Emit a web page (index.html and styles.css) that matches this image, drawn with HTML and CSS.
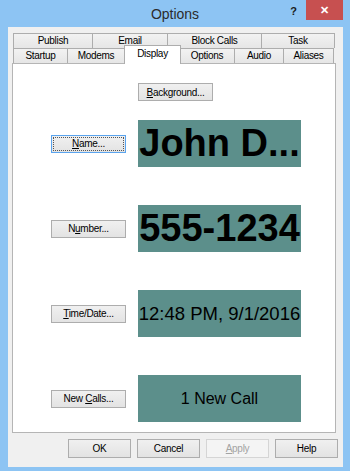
FILE: index.html
```html
<!DOCTYPE html>
<html>

<head>
    <meta charset="UTF-8">
    <title>Options</title>
    <link rel="stylesheet" href="styles.css">
</head>

<body>
    <div class="window">
        <div class="titlebar">
            <span></span>
            <span class="title">Options</span>
            <div class="controls">
                <span class="help">?</span>
                <span class="close">&#x2715;</span>
            </div>
        </div>

        <div class="client">
            <div class="tabs">
                <div class="tab-row">
                    <div class="tab w79">Publish</div>
                    <div class="tab w75">Email</div>
                    <div class="tab w94">Block Calls</div>
                    <div class="tab w74 last">Task</div>
                </div>
                <div class="tab-row">
                    <div class="tab w54">Startup</div>
                    <div class="tab w57">Modems</div>
                    <div class="tab w57 active">Display</div>
                    <div class="tab w54">Options</div>
                    <div class="tab w49">Audio</div>
                    <div class="tab w51 last">Aliases</div>
                </div>
            </div>

            <div class="panel">
                <button class="btn bg-btn"><u>B</u>ackground...</button>
                <div class="rows">
                    <button class="btn focused"><u>N</u>ame...</button>
                    <div class="preview big">John D...</div>

                    <button class="btn">N<u>u</u>mber...</button>
                    <div class="preview big">555-1234</div>

                    <button class="btn"><u>T</u>ime/Date...</button>
                    <div class="preview medium">12:48 PM, 9/1/2016</div>

                    <button class="btn">New <u>C</u>alls...</button>
                    <div class="preview small">1 New Call</div>
                </div>
            </div>

            <div class="actions">
                <button class="btn action">OK</button>
                <button class="btn action">Cancel</button>
                <button class="btn action" disabled><u>A</u>pply</button>
                <button class="btn action">Help</button>
            </div>
        </div>
    </div>
</body>

</html>
```

FILE: styles.css
```css
body {
    margin: 0;
    background-color: #8dc4f3;
    font-family: "Liberation Sans", Arial, sans-serif;
}

.window {
    width: 350px;
    height: 471px;
    display: flex;
    flex-direction: column;
    background-color: #8dc4f3;
}

.titlebar {
    height: 27px;
    display: grid;
    grid-template-columns: 1fr auto 1fr;
    align-items: start;
}

.title {
    font-size: 14px;
    color: #2b2b2b;
    padding-top: 6px;
}

.controls {
    display: flex;
    justify-content: flex-end;
    align-items: start;
    padding-right: 7px;
}

.help {
    font-size: 11px;
    font-weight: bold;
    color: #1a1a1a;
    padding-top: 5px;
    margin-right: 9px;
}

.close {
    width: 37px;
    height: 20px;
    background-color: #c75050;
    color: #fff;
    font-size: 11px;
    font-weight: bold;
    display: flex;
    align-items: center;
    justify-content: center;
}

.client {
    height: 440px;
    margin: 0 7px 0 8px;
    background-color: #f0f0f0;
    padding: 6px 0 0 4px;
    box-sizing: border-box;
}

.tabs {
    margin: 0 8px 0 1px;
}

.tab-row {
    display: flex;
    height: 15px;
    align-items: flex-start;
}

.tab {
    height: 15px;
    box-sizing: border-box;
    border-top: 1px solid #adadad;
    border-left: 1px solid #adadad;
    background: linear-gradient(#f2f2f2, #e6e6e6);
    font-size: 10px;
    letter-spacing: -0.3px;
    line-height: 14px;
    text-align: center;
    color: #000;
}

.tab.last {
    border-right: 1px solid #adadad;
}

.tab.active {
    position: relative;
    z-index: 2;
    height: 19px;
    margin-top: -3px;
    background: #fff;
    border-right: 1px solid #adadad;
    margin-right: -1px;
    line-height: 16px;
}

.tab.active + .tab {
    border-left: none;
}

.w79 { width: 79px; }
.w75 { width: 75px; }
.w94 { width: 94px; }
.w74 { width: 74px; }
.w54 { width: 54px; }
.w57 { width: 57px; }
.w49 { width: 49px; }
.w51 { width: 51px; }

.panel {
    height: 370px;
    margin-right: 7px;
    box-sizing: border-box;
    border: 1px solid #b5b5b5;
    background-color: #fff;
    display: flex;
    flex-direction: column;
    align-items: flex-start;
}

.btn {
    height: 18px;
    width: 75px;
    padding: 0;
    box-sizing: border-box;
    border: 1px solid #adadad;
    background: linear-gradient(#f0f0f0, #e3e3e3);
    font-family: "Liberation Sans", Arial, sans-serif;
    font-size: 10px;
    letter-spacing: -0.3px;
    color: #000;
}

.btn.focused {
    border-color: #5aa4ee;
    outline: 1px dotted #555;
    outline-offset: -3px;
}

.bg-btn {
    margin: 19px 0 0 125px;
}

.rows {
    margin: 19px 0 0 38px;
    display: grid;
    grid-template-columns: 75px 163px;
    column-gap: 12px;
    row-gap: 38px;
    align-items: center;
}

.preview {
    height: 47px;
    background-color: #5c8f8b;
    color: #000;
    display: flex;
    align-items: center;
    justify-content: center;
    white-space: nowrap;
    overflow: hidden;
}

.preview.big {
    font-size: 38px;
    font-weight: bold;
}

.preview.medium {
    font-size: 18.5px;
}

.preview.small {
    font-size: 16px;
}

.actions {
    display: flex;
    justify-content: flex-end;
    gap: 6px;
    margin-top: 6px;
    padding-right: 5px;
}

.btn.action {
    width: 63px;
    height: 19px;
}

.btn:disabled {
    color: #a3a3a3;
    border-color: #d5d5d5;
    background: #f4f4f4;
}
```
